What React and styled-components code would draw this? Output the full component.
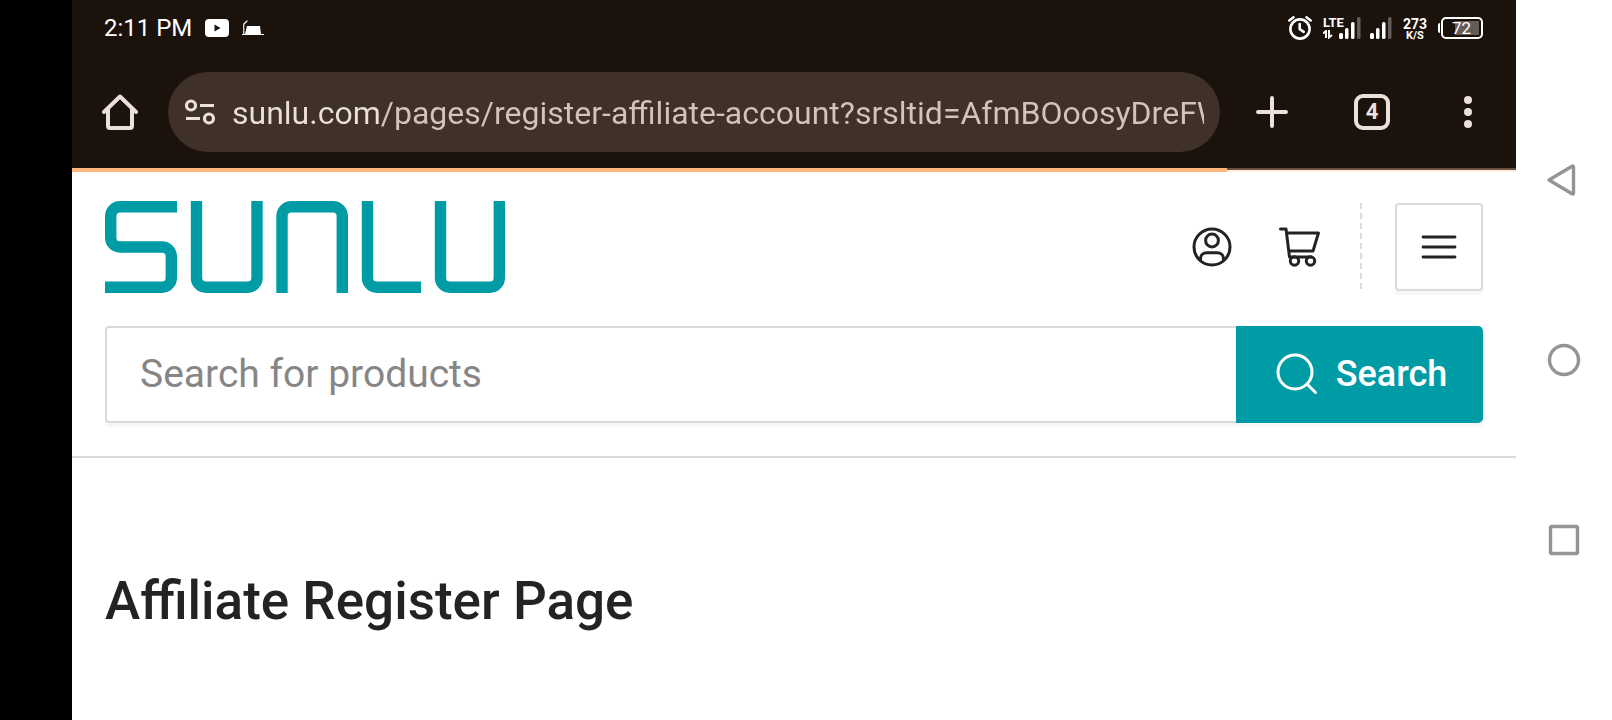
import React from "react";
import styled, { createGlobalStyle } from "styled-components";

const GlobalStyle = createGlobalStyle`
  *, *::before, *::after { box-sizing: border-box; }
  body {
    margin: 0;
    background: #fff;
    color: #232323;
    font-family: Roboto, "Liberation Sans", sans-serif;
  }
  button, input { font-family: inherit; }
  svg { display: block; flex: none; }
`;

const teal = "#009ca6";
const cream = "#ece0db";

const Device = styled.div`
  display: grid;
  grid-template-columns: 72px minmax(0, 1fr) 96px;
  min-height: 100vh;
`;

const Cutout = styled.div`
  background: #000;
`;

const Screen = styled.div`
  display: flex;
  flex-direction: column;
`;

const BrowserChrome = styled.div`
  background: #1b120c;
`;

const StatusBar = styled.div`
  display: flex;
  align-items: center;
  justify-content: space-between;
  height: 56px;
  padding: 0 33px 0 32px;
  color: #fff;
`;

const StatusGroup = styled.div`
  display: flex;
  align-items: center;
  gap: ${(p) => p.$gap}px;
`;

const Clock = styled.span`
  font-size: 24px;
  line-height: 28px;
`;

const Signal = styled.div`
  position: relative;
  display: flex;
  justify-content: flex-end;
  width: ${(p) => p.$width}px;
`;

const NetworkType = styled.span`
  position: absolute;
  top: 0;
  left: 0;
  font-size: 13px;
  font-weight: 700;
  line-height: 11px;
`;

const DataArrows = styled.svg`
  position: absolute;
  bottom: 0;
  left: 0;
`;

const Speed = styled.div`
  display: flex;
  flex-direction: column;
  align-items: center;
  padding-top: 2px;
  font-weight: 700;
`;

const SpeedValue = styled.span`
  font-size: 14px;
  line-height: 12px;
`;

const SpeedUnit = styled.span`
  font-size: 11px;
  line-height: 11px;
`;

const Battery = styled.div`
  display: flex;
  align-items: center;
  gap: 1px;
`;

const BatteryTip = styled.span`
  width: 2px;
  height: 10px;
  border-radius: 2px 0 0 2px;
  background: #fff;
`;

const BatteryBody = styled.span`
  width: 42px;
  height: 22px;
  border: 2px solid #fff;
  border-radius: 5px;
  padding: 2px;
`;

const BatteryFill = styled.span`
  display: block;
  height: 14px;
  background: linear-gradient(to left, #655b57 72%, transparent 72%);
  font-size: 17px;
  line-height: 15px;
  padding-left: 7px;
`;

const Toolbar = styled.div`
  display: flex;
  align-items: center;
  gap: 4px;
  height: 112px;
`;

const ToolButton = styled.button`
  display: flex;
  align-items: center;
  justify-content: center;
  flex: none;
  width: 96px;
  height: 96px;
  margin-left: ${(p) => (p.$joined ? "-4px" : "0")};
  border: 0;
  padding: 0;
  background: none;
  color: ${cream};
`;

const HomeButton = styled(ToolButton)`
  margin-right: -4px;
`;

const TabCount = styled.span`
  display: flex;
  align-items: center;
  justify-content: center;
  width: 36px;
  height: 36px;
  border: 4px solid currentColor;
  border-radius: 9px;
  font-size: 22px;
  font-weight: 700;
  line-height: 28px;
`;

const AddressBar = styled.div`
  display: flex;
  align-items: center;
  gap: 16px;
  flex: 1;
  min-width: 0;
  height: 80px;
  padding: 0 16px;
  border-radius: 40px;
  background: #3f312a;
  color: ${cream};
`;

const SiteButton = styled.button`
  border: 0;
  padding: 0;
  background: none;
  color: inherit;
`;

const AddressInput = styled.input`
  flex: 1;
  min-width: 0;
  height: 48px;
  border: 0;
  padding: 2px 0 0;
  outline: 0;
  font-size: 32px;
  line-height: 46px;
  background: linear-gradient(to right, ${cream} 149px, #d7c2b8 149px);
  background-clip: text;
  -webkit-text-fill-color: transparent;
`;

const Progress = styled.div`
  height: 4px;
  background: linear-gradient(#6b4f3f 2px, #ffefe3 2px);
`;

const ProgressFill = styled.div`
  width: 80%;
  height: 4px;
  background: #ffb77c;
`;

const SiteHeader = styled.header`
  display: flex;
  flex-direction: column;
  gap: 33px;
  padding: 29px 33px 33px;
  border-bottom: 2px solid #dadada;
`;

const HeaderRow = styled.div`
  display: flex;
  align-items: center;
  justify-content: space-between;
`;

const HeaderActions = styled.div`
  display: flex;
  align-items: center;
`;

const IconLink = styled.a`
  display: block;
  margin-right: ${(p) => p.$after}px;
  color: #232323;
`;

const Divider = styled.span`
  width: 2px;
  height: 88px;
  margin-right: 33px;
  background: repeating-linear-gradient(#dadada 0 6px, transparent 6px 10px);
`;

const MenuButton = styled.button`
  display: flex;
  align-items: center;
  justify-content: center;
  width: 88px;
  height: 88px;
  padding: 0;
  border: 2px solid #dadada;
  border-radius: 4px;
  background: #fff;
  color: #232323;
  box-shadow: 0 4px 0 #f7f7f7;
`;

const SearchForm = styled.form`
  display: flex;
  height: 97px;
  border-radius: 4px;
  box-shadow: 0 4px 0 #f7f7f7;
`;

const SearchInput = styled.input`
  flex: 1;
  min-width: 0;
  padding: 0 33px 2px;
  border: 2px solid #dadada;
  border-right: 0;
  border-radius: 4px 0 0 4px;
  outline: 0;
  background: #fff;
  font-size: 39px;
  color: #232323;
  &::placeholder { color: #868686; opacity: 1; }
`;

const SearchButton = styled.button`
  display: flex;
  align-items: center;
  justify-content: center;
  gap: 18px;
  width: 247px;
  border: 0;
  border-radius: 0 5px 5px 0;
  padding: 0 0 2px 4px;
  background: ${teal};
  color: #fff;
  font-size: 36px;
  font-weight: 500;
`;

const Content = styled.main`
  padding: 111px 33px 32px;
`;

const Title = styled.h1`
  margin: 0;
  font-size: 53px;
  font-weight: 500;
  line-height: 64px;
`;

const NavBar = styled.nav`
  display: grid;
  grid-template-rows: repeat(3, 25vh);
  align-content: center;
  height: 100vh;
  background: #fff;
`;

const NavButton = styled.button`
  display: flex;
  align-items: center;
  justify-content: center;
  border: 0;
  padding: 0;
  background: none;
  color: #959595;
`;

const NavIcon = ({ children }) => (
  <svg width="36" height="36" viewBox="0 0 36 36" fill="none" stroke="currentColor" strokeWidth="3.400" strokeLinejoin="round">
    {children}
  </svg>
);

const SignalBars = () => (
  <svg width="22" height="22" viewBox="0 0 22 22" fill="#fff">
    <rect x="0" y="16" width="4" height="6" rx="1.5" />
    <rect x="6" y="11" width="3.500" height="11" rx="1.5" />
    <rect x="12" y="5" width="3.500" height="17" rx="1.5" />
    <rect x="18" y="0" width="3.500" height="22" rx="1.5" fill="#655b57" />
  </svg>
);

const Logo = () => (
  <svg width="400" height="92" viewBox="0 0 400 92" fill="none" stroke={teal} strokeWidth="11.4" role="img" aria-label="Sunlu">
    <path d="M72 5.7H15a9.3 9.3 0 0 0-9.3 9.3V36.7a9.3 9.3 0 0 0 9.3 9.3H57a9.3 9.3 0 0 1 9.3 9.3V77a9.3 9.3 0 0 1-9.3 9.3H0" />
    <path d="M91.5 0V77a9.3 9.3 0 0 0 9.3 9.3H142.7a9.3 9.3 0 0 0 9.3-9.3V0" />
    <path d="M177 92V15a9.3 9.3 0 0 1 9.3-9.3H228a9.3 9.3 0 0 1 9.3 9.3V92" />
    <path d="M262.5 0V77a9.3 9.3 0 0 0 9.3 9.3H316" />
    <path d="M335.5 0V77a9.3 9.3 0 0 0 9.3 9.3H385a9.3 9.3 0 0 0 9.3-9.3V0" />
  </svg>
);

export default function App() {
  return (
    <>
      <GlobalStyle />
      <Device>
        <Cutout />
        <Screen>
          <BrowserChrome>
            <StatusBar>
              <StatusGroup $gap={13}>
                <Clock>2:11 PM</Clock>
                <StatusGroup $gap={13}>
                  <svg width="24" height="18" viewBox="0 0 24 18">
                    <rect width="24" height="18" rx="4" fill="#fff" />
                    <path d="M9.5 5.5v7l6-3.500z" fill="#1b120c" />
                  </svg>
                  <svg width="22" height="16" viewBox="0 0 22 16" fill="#fff">
                    <path d="M5 6h13l1 8H22v1H0v-1h3z" />
                    <path d="M1.800 14V4L5 1" fill="none" stroke="#fff" strokeWidth="1.200" strokeLinecap="round" />
                    <path d="M3.300 6v5" stroke="#1b120c" strokeWidth="1" />
                  </svg>
                </StatusGroup>
              </StatusGroup>
              <StatusGroup $gap={11}>
                <svg width="24" height="24" viewBox="0 0 24 24" fill="none" stroke="#fff" strokeLinecap="round" strokeLinejoin="round">
                  <circle cx="12" cy="13" r="9.600" strokeWidth="2.600" />
                  <path d="M11.700 8v5.200l4 2.600" strokeWidth="2.600" />
                  <path d="M1.300 4.500L5.500 1.200M22.700 4.500L18.500 1.200" strokeWidth="2.400" />
                </svg>
                <StatusGroup $gap={9}>
                  <Signal $width={38}>
                    <NetworkType>LTE</NetworkType>
                    <DataArrows width="10" height="9" viewBox="0 0 10 9" fill="none" stroke="#fff" strokeWidth="2">
                      <path d="M0 3.500L3 1V8M6 0V7.500L9 5" />
                    </DataArrows>
                    <SignalBars />
                  </Signal>
                  <SignalBars />
                </StatusGroup>
                <Speed>
                  <SpeedValue>273</SpeedValue>
                  <SpeedUnit>K/S</SpeedUnit>
                </Speed>
                <Battery>
                  <BatteryTip />
                  <BatteryBody>
                    <BatteryFill>72</BatteryFill>
                  </BatteryBody>
                </Battery>
              </StatusGroup>
            </StatusBar>
            <Toolbar>
              <HomeButton type="button" aria-label="Home">
                <svg width="36" height="36" viewBox="0 0 36 36" fill="none" stroke="currentColor" strokeWidth="4" strokeLinecap="round" strokeLinejoin="round">
                  <path d="M2 18L18 2.500L34 18M6 15V32a2 2 0 0 0 2 2H28a2 2 0 0 0 2-2V15" />
                </svg>
              </HomeButton>
              <AddressBar>
                <SiteButton type="button" aria-label="Site information">
                  <svg width="32" height="26" viewBox="0 0 32 26" fill="none" stroke="currentColor" strokeWidth="3.200">
                    <circle cx="7" cy="6.500" r="4.500" />
                    <path d="M16 6.500H30M2 19.500H16" />
                    <circle cx="25" cy="19.500" r="4.500" />
                  </svg>
                </SiteButton>
                <AddressInput
                  aria-label="Address"
                  type="text"
                  spellCheck={false}
                  defaultValue="sunlu.com/pages/register-affiliate-account?srsltid=AfmBOoosyDreFW"
                />
              </AddressBar>
              <ToolButton type="button" aria-label="New tab">
                <svg width="32" height="32" viewBox="0 0 32 32" stroke="currentColor" strokeWidth="4" strokeLinecap="round">
                  <path d="M16 2V30M2 16H30" />
                </svg>
              </ToolButton>
              <ToolButton type="button" aria-label="Open tabs">
                <TabCount>4</TabCount>
              </ToolButton>
              <ToolButton type="button" aria-label="More options" $joined>
                <svg width="8" height="32" viewBox="0 0 8 32" fill="currentColor">
                  <circle cx="4" cy="4" r="4" />
                  <circle cx="4" cy="16" r="4" />
                  <circle cx="4" cy="28" r="4" />
                </svg>
              </ToolButton>
            </Toolbar>
            <Progress>
              <ProgressFill />
            </Progress>
          </BrowserChrome>
          <SiteHeader>
            <HeaderRow>
              <a href="#home">
                <Logo />
              </a>
              <HeaderActions>
                <IconLink href="#account" aria-label="Account" $after={47}>
                  <svg width="40" height="40" viewBox="0 0 40 40" fill="none" stroke="currentColor" strokeWidth="3" strokeLinecap="round" strokeLinejoin="round">
                    <circle cx="20" cy="20" r="18" />
                    <circle cx="20" cy="13.500" r="6.400" />
                    <path d="M8.500 33V31.500a6 6 0 0 1 6-5.700h11a6 6 0 0 1 6 5.700V33" />
                  </svg>
                </IconLink>
                <IconLink href="#cart" aria-label="Cart" $after={40}>
                  <svg width="41" height="40" viewBox="0 0 41 40" fill="none" stroke="currentColor" strokeWidth="3" strokeLinecap="round" strokeLinejoin="round">
                    <path d="M1.500 1.900H7L10.500 30H32M7.500 5.900H39.500L34 24H10" />
                    <circle cx="15.500" cy="34" r="4.200" />
                    <circle cx="31.500" cy="34" r="4.200" />
                  </svg>
                </IconLink>
                <Divider />
                <MenuButton type="button" aria-label="Menu">
                  <svg width="36" height="24" viewBox="0 0 36 24" stroke="currentColor" strokeWidth="2.800" strokeLinecap="round">
                    <path d="M2 2H34M2 12H34M2 22H34" />
                  </svg>
                </MenuButton>
              </HeaderActions>
            </HeaderRow>
            <SearchForm role="search" onSubmit={(e) => e.preventDefault()}>
              <SearchInput type="text" aria-label="Search for products" placeholder="Search for products" />
              <SearchButton type="submit">
                <svg width="42" height="42" viewBox="0 0 42 42" fill="none" stroke="currentColor" strokeWidth="3" strokeLinecap="round">
                  <circle cx="19" cy="19" r="17" />
                  <path d="M31.500 31.500L39.500 39.500" />
                </svg>
                Search
              </SearchButton>
            </SearchForm>
          </SiteHeader>
          <Content>
            <Title>Affiliate Register Page</Title>
          </Content>
        </Screen>
        <NavBar aria-label="System navigation">
          <NavButton type="button" aria-label="Back">
            <NavIcon>
              <path d="M3 18L26 4.200Q27.500 3.500 27.500 5V31Q27.500 32.500 26 31.800Z" />
            </NavIcon>
          </NavButton>
          <NavButton type="button" aria-label="Home screen">
            <NavIcon>
              <circle cx="18" cy="18" r="14.500" />
            </NavIcon>
          </NavButton>
          <NavButton type="button" aria-label="Recent apps">
            <NavIcon>
              <rect x="4.500" y="4.500" width="27" height="27" rx="1.500" />
            </NavIcon>
          </NavButton>
        </NavBar>
      </Device>
    </>
  );
}
